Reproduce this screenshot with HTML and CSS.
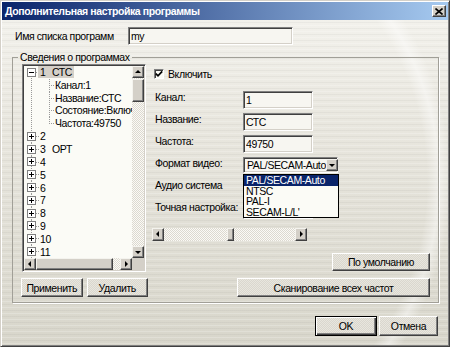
FILE: index.html
```html
<!DOCTYPE html>
<html lang="ru">
<head>
    <meta charset="UTF-8">
    <title>Дополнительная настройка программы</title>
    <link rel="stylesheet" href="styles.css">
</head>
<body>
    <div class="window">
        <div class="titlebar">
            <span class="title">Дополнительная настройка программы</span>
            <span class="close">
                <svg width="8" height="7" viewBox="0 0 8 7"><path d="M0.5 0.5 L7.5 6.5 M7.5 0.5 L0.5 6.5" stroke="#000" stroke-width="1.6" fill="none"/></svg>
            </span>
        </div>

        <div class="client">
            <div class="name-row">
                <label for="listName">Имя списка программ</label>
                <input class="edit name" id="listName" type="text" value="my">
            </div>

            <fieldset class="group">
                <legend>Сведения о программах</legend>
                <div class="group-grid">
                    <!-- left column: tree + buttons -->
                    <div class="left">
                        <div class="tree">
                            <div class="tree-body">
                                <ul class="nodes">
                                    <li class="node first">
                                        <div class="row"><span class="toggle"></span><span class="caption selected"><span class="num">1</span>СТС</span></div>
                                        <ul class="children">
                                            <li>Канал:1</li>
                                            <li>Название:СТС</li>
                                            <li>Состояние:Включить</li>
                                            <li class="last">Частота:49750</li>
                                        </ul>
                                    </li>
                                    <li class="node"><div class="row"><span class="toggle plus"></span><span class="caption"><span class="num">2</span></span></div></li>
                                    <li class="node"><div class="row"><span class="toggle plus"></span><span class="caption"><span class="num">3</span>ОРТ</span></div></li>
                                    <li class="node"><div class="row"><span class="toggle plus"></span><span class="caption"><span class="num">4</span></span></div></li>
                                    <li class="node"><div class="row"><span class="toggle plus"></span><span class="caption"><span class="num">5</span></span></div></li>
                                    <li class="node"><div class="row"><span class="toggle plus"></span><span class="caption"><span class="num">6</span></span></div></li>
                                    <li class="node"><div class="row"><span class="toggle plus"></span><span class="caption"><span class="num">7</span></span></div></li>
                                    <li class="node"><div class="row"><span class="toggle plus"></span><span class="caption"><span class="num">8</span></span></div></li>
                                    <li class="node"><div class="row"><span class="toggle plus"></span><span class="caption"><span class="num">9</span></span></div></li>
                                    <li class="node"><div class="row"><span class="toggle plus"></span><span class="caption"><span class="num">10</span></span></div></li>
                                    <li class="node"><div class="row"><span class="toggle plus"></span><span class="caption"><span class="num">11</span></span></div></li>
                                </ul>
                            </div>
                            <div class="vscroll">
                                <span class="sb-btn up"></span>
                                <span class="sb-track"><span class="sb-thumb vthumb"></span></span>
                                <span class="sb-btn down"></span>
                            </div>
                            <div class="hscroll">
                                <span class="sb-btn left-arr"></span>
                                <span class="sb-track"><span class="sb-thumb hthumb"></span></span>
                                <span class="sb-btn right-arr"></span>
                            </div>
                            <div class="sb-corner"></div>
                        </div>

                        <div class="btn-row">
                            <button class="btn small">Применить</button>
                            <button class="btn small">Удалить</button>
                        </div>
                    </div>

                    <!-- right column: program details -->
                    <div class="right">
                        <div class="check-row">
                            <span class="checkbox">
                                <svg width="8" height="8" viewBox="0 0 8 8"><path d="M0.8 3.6 L3 5.8 L7.2 1.4" stroke="#000" stroke-width="1.7" fill="none"/></svg>
                            </span>
                            <span>Включить</span>
                        </div>

                        <div class="fields">
                            <span class="field-label">Канал:</span>
                            <input class="edit short" type="text" value="1">

                            <span class="field-label">Название:</span>
                            <input class="edit short" type="text" value="СТС">

                            <span class="field-label">Частота:</span>
                            <input class="edit short" type="text" value="49750">

                            <span class="field-label">Формат видео:</span>
                            <div class="combo open">
                                <span class="combo-text">PAL/SECAM-Auto</span>
                                <span class="sb-btn down combo-btn"></span>
                                <ul class="combo-list">
                                    <li class="active">PAL/SECAM-Auto</li>
                                    <li>NTSC</li>
                                    <li>PAL-I</li>
                                    <li>SECAM-L/L'</li>
                                </ul>
                            </div>

                            <span class="field-label">Аудио система</span>
                            <div class="combo">
                                <span class="combo-text"></span>
                                <span class="sb-btn down combo-btn"></span>
                            </div>

                            <span class="field-label">Точная настройка:</span>
                            <input class="edit short" type="text" value="">
                        </div>

                        <div class="slider">
                            <span class="sb-btn left-arr"></span>
                            <span class="sb-track"><span class="sb-thumb slider-thumb"></span></span>
                            <span class="sb-btn right-arr"></span>
                        </div>

                        <button class="btn default-btn">По умолчанию</button>
                        <button class="btn scan-btn">Сканирование всех частот</button>
                    </div>
                </div>
            </fieldset>

            <div class="footer">
                <button class="btn ok">OK</button>
                <button class="btn cancel">Отмена</button>
            </div>
        </div>
    </div>
</body>
</html>
```

FILE: styles.css
```css
* {
    box-sizing: border-box;
}

body {
    margin: 0;
    font-family: "Liberation Sans", Arial, sans-serif;
    font-size: 10.5px;
    letter-spacing: -0.4px;
    color: #000;
}

/* Window frame */
.window {
    width: 450px;
    height: 347px;
    padding: 1px;
    display: flex;
    flex-direction: column;
    white-space: nowrap;
    border: 1px solid;
    border-color: #d4d0c8 #404040 #404040 #d4d0c8;
    box-shadow: inset 1px 1px #fff, inset -1px -1px #808080;
    background-color: #e3e1d7;
    background-image:
        radial-gradient(circle 300px at 150px 180px, transparent 92%, rgba(255, 255, 255, 0.45) 96%, transparent 100%),
        repeating-linear-gradient(to bottom, rgba(255, 255, 255, 0.2) 0 1px, transparent 1px 3px, rgba(0, 0, 0, 0.035) 3px 4px, transparent 4px 6px),
        linear-gradient(to bottom, #f4f3ee 0, #e9e7df 35%, #d8d6cb 100%);
}

.titlebar {
    height: 18px;
    flex: none;
    display: flex;
    align-items: center;
    justify-content: space-between;
    padding: 0 2px 0 3px;
    background: linear-gradient(to right, #0a246a, #a6caf0);
    color: #fff;
    font-weight: bold;
}

.close {
    width: 14px;
    height: 12px;
    display: flex;
    align-items: center;
    justify-content: center;
    background: #d4d0c8;
    border: 1px solid;
    border-color: #fff #404040 #404040 #fff;
    box-shadow: inset -1px -1px #808080;
}

.client {
    flex: 1;
    padding: 7px 10px 0 10px;
}

/* Sunken edit box */
.edit {
    height: 18px;
    margin: 0;
    padding: 0 2px;
    font: inherit;
    letter-spacing: inherit;
    color: #000;
    background: #f7f6f1;
    border: 1px solid;
    border-color: #808080 #fff #fff #808080;
    box-shadow: inset 1px 1px #404040, inset -1px -1px #d4d0c8;
    outline: none;
}

.name-row {
    display: grid;
    grid-template-columns: 113px 165px;
    align-items: center;
    padding-left: 3px;
}

/* Group box */
.group {
    width: 427px;
    margin: 6px 0 0;
    padding: 0 7px 5px 9px;
    border: 1px solid #a19f97;
    box-shadow: 1px 1px 0 #fff;
}

.group legend {
    padding: 0 2px;
    margin-left: -4px;
    line-height: 13px;
}

.group-grid {
    display: grid;
    grid-template-columns: 126px 278px;
    column-gap: 5px;
}

.left {
    display: flex;
    flex-direction: column;
}

/* Tree view */
.tree {
    width: 124px;
    height: 208px;
    display: grid;
    grid-template-columns: 1fr 12px;
    grid-template-rows: 1fr 12px;
    background: #fbfbf6;
    border: 1px solid;
    border-color: #808080 #fff #fff #808080;
    box-shadow: inset 1px 1px #404040, inset -1px -1px #d4d0c8;
    padding: 1px;
}

.tree-body {
    overflow: hidden;
    padding-left: 3px;
}

.nodes,
.children {
    list-style: none;
    margin: 0;
    padding: 0;
}

.node {
    background-image:
        repeating-linear-gradient(to bottom, #9a9a9a 0 1px, transparent 1px 2px),
        repeating-linear-gradient(to right, #9a9a9a 0 1px, transparent 1px 2px);
    background-size: 1px 100%, 3px 1px;
    background-position: 4px 0, 9px 6px;
    background-repeat: no-repeat;
}

.node.first {
    background-position: 4px 6px, 9px 6px;
}

.row {
    height: 12.8px;
    display: flex;
    align-items: center;
}

.toggle {
    position: relative;
    flex: none;
    width: 9px;
    height: 9px;
    border: 1px solid #808080;
    background: #fff;
}

.toggle::before {
    content: "";
    position: absolute;
    left: 1px;
    top: 3px;
    width: 5px;
    height: 1px;
    background: #000;
}

.toggle.plus::after {
    content: "";
    position: absolute;
    left: 3px;
    top: 1px;
    width: 1px;
    height: 5px;
    background: #000;
}

.caption {
    margin-left: 2px;
    padding: 0 2px;
    line-height: 12px;
}

.caption.selected {
    background: #d4d0c8;
}

.num {
    display: inline-block;
    width: 12px;
}

.children {
    padding-left: 21px;
}

.children li {
    height: 12.8px;
    line-height: 12.8px;
    padding-left: 7px;
    background-image:
        repeating-linear-gradient(to right, #9a9a9a 0 1px, transparent 1px 2px),
        repeating-linear-gradient(to bottom, #9a9a9a 0 1px, transparent 1px 2px);
    background-size: 6px 1px, 1px 100%;
    background-position: 1px 6px, 1px 0;
    background-repeat: no-repeat;
}

.children li.last {
    background-size: 6px 1px, 1px 7px;
}

/* Scroll bars */
.vscroll {
    display: flex;
    flex-direction: column;
}

.hscroll,
.slider {
    display: flex;
}

.sb-btn {
    position: relative;
    flex: none;
    width: 12px;
    height: 12px;
    background: #d4d0c8;
    border: 1px solid;
    border-color: #f4f3ee #404040 #404040 #f4f3ee;
    box-shadow: inset -1px -1px #808080;
}

.sb-btn::after {
    content: "";
    position: absolute;
    border-style: solid;
    border-color: transparent;
}

.sb-btn.up::after {
    left: 2px;
    top: 3px;
    border-width: 0 3px 3px;
    border-bottom-color: #000;
}

.sb-btn.down::after {
    left: 2px;
    top: 4px;
    border-width: 3px 3px 0;
    border-top-color: #000;
}

.sb-btn.left-arr::after {
    left: 3px;
    top: 2px;
    border-width: 3px 3px 3px 0;
    border-right-color: #000;
}

.sb-btn.right-arr::after {
    left: 4px;
    top: 2px;
    border-width: 3px 0 3px 3px;
    border-left-color: #000;
}

.sb-track {
    flex: 1;
    display: flex;
    background: repeating-conic-gradient(#fbfaf6 0 25%, #dcd9d0 0 50%) 0 0 / 2px 2px;
}

.vscroll .sb-track {
    flex-direction: column;
}

.sb-thumb {
    flex: none;
    background: #d4d0c8;
    border: 1px solid;
    border-color: #f4f3ee #404040 #404040 #f4f3ee;
    box-shadow: inset -1px -1px #808080;
}

.vthumb {
    height: 23px;
    margin-top: 1px;
}

.hthumb {
    width: 77px;
}

.sb-corner {
    background: #d4d0c8;
}

/* Buttons */
.btn {
    height: 19px;
    margin: 0;
    padding: 0;
    font: inherit;
    letter-spacing: inherit;
    color: #000;
    background: repeating-conic-gradient(#e8e6de 0 25%, #dad7ce 0 50%) 0 0 / 2px 2px;
    border: 1px solid;
    border-color: #fff #404040 #404040 #fff;
    box-shadow: inset -1px -1px #808080;
}

.btn-row {
    display: flex;
    gap: 4px;
    margin-top: 6px;
    margin-left: -1px;
}

.btn.small {
    width: 62px;
}

/* Right column */
.right {
    display: flex;
    flex-direction: column;
}

.check-row {
    height: 13px;
    margin: 3px 0 0 1px;
    display: flex;
    align-items: center;
    gap: 4px;
}

.checkbox {
    width: 10px;
    height: 10px;
    display: flex;
    align-items: center;
    justify-content: center;
    background: #fbfbf6;
    border: 1px solid;
    border-color: #808080 #fff #fff #808080;
    box-shadow: inset 1px 1px #404040;
}

.fields {
    margin-top: 11px;
    display: grid;
    grid-template-columns: 90px 1fr;
    grid-auto-rows: 18px;
    row-gap: 4px;
}

.field-label {
    padding-left: 2px;
    line-height: 13px;
}

.edit.short {
    width: 70px;
}

.combo {
    position: relative;
    width: 95px;
    height: 16px;
    display: flex;
    align-items: center;
    justify-content: space-between;
    padding: 0 2px 0 3px;
    background: #f7f6f1;
    border: 1px solid;
    border-color: #808080 #fff #fff #808080;
    box-shadow: inset 1px 1px #404040, inset -1px -1px #d4d0c8;
}

.combo-btn {
    width: 12px;
    height: 12px;
}

.combo-list {
    position: absolute;
    z-index: 2;
    top: 16px;
    left: -1px;
    width: 96px;
    margin: 0;
    padding: 0;
    list-style: none;
    background: #fbfbf6;
    border: 1px solid #000;
}

.combo-list li {
    height: 10.5px;
    line-height: 10.5px;
    padding-left: 2px;
}

.combo-list li.active {
    background: #0a246a;
    color: #fff;
}

.slider {
    width: 155px;
    height: 13px;
    margin: 9px 0 0 -1px;
}

.slider .sb-btn {
    height: 13px;
}

.slider-thumb {
    width: 7px;
    margin-left: 63px;
}

.default-btn {
    width: 98px;
    height: 18px;
    margin: 12px 1px 0 0;
    align-self: flex-end;
}

.scan-btn {
    width: 193px;
    margin: 7px 1px 0 0;
    align-self: flex-end;
}

/* Dialog buttons */
.footer {
    display: flex;
    justify-content: flex-end;
    gap: 2px;
    margin-top: 13px;
}

.btn.ok {
    width: 62px;
    height: 20px;
    border-color: #000;
    box-shadow: inset 1px 1px #fff, inset -1px -1px #404040, inset -2px -2px #808080;
}

.btn.cancel {
    width: 59px;
    height: 20px;
}
```
